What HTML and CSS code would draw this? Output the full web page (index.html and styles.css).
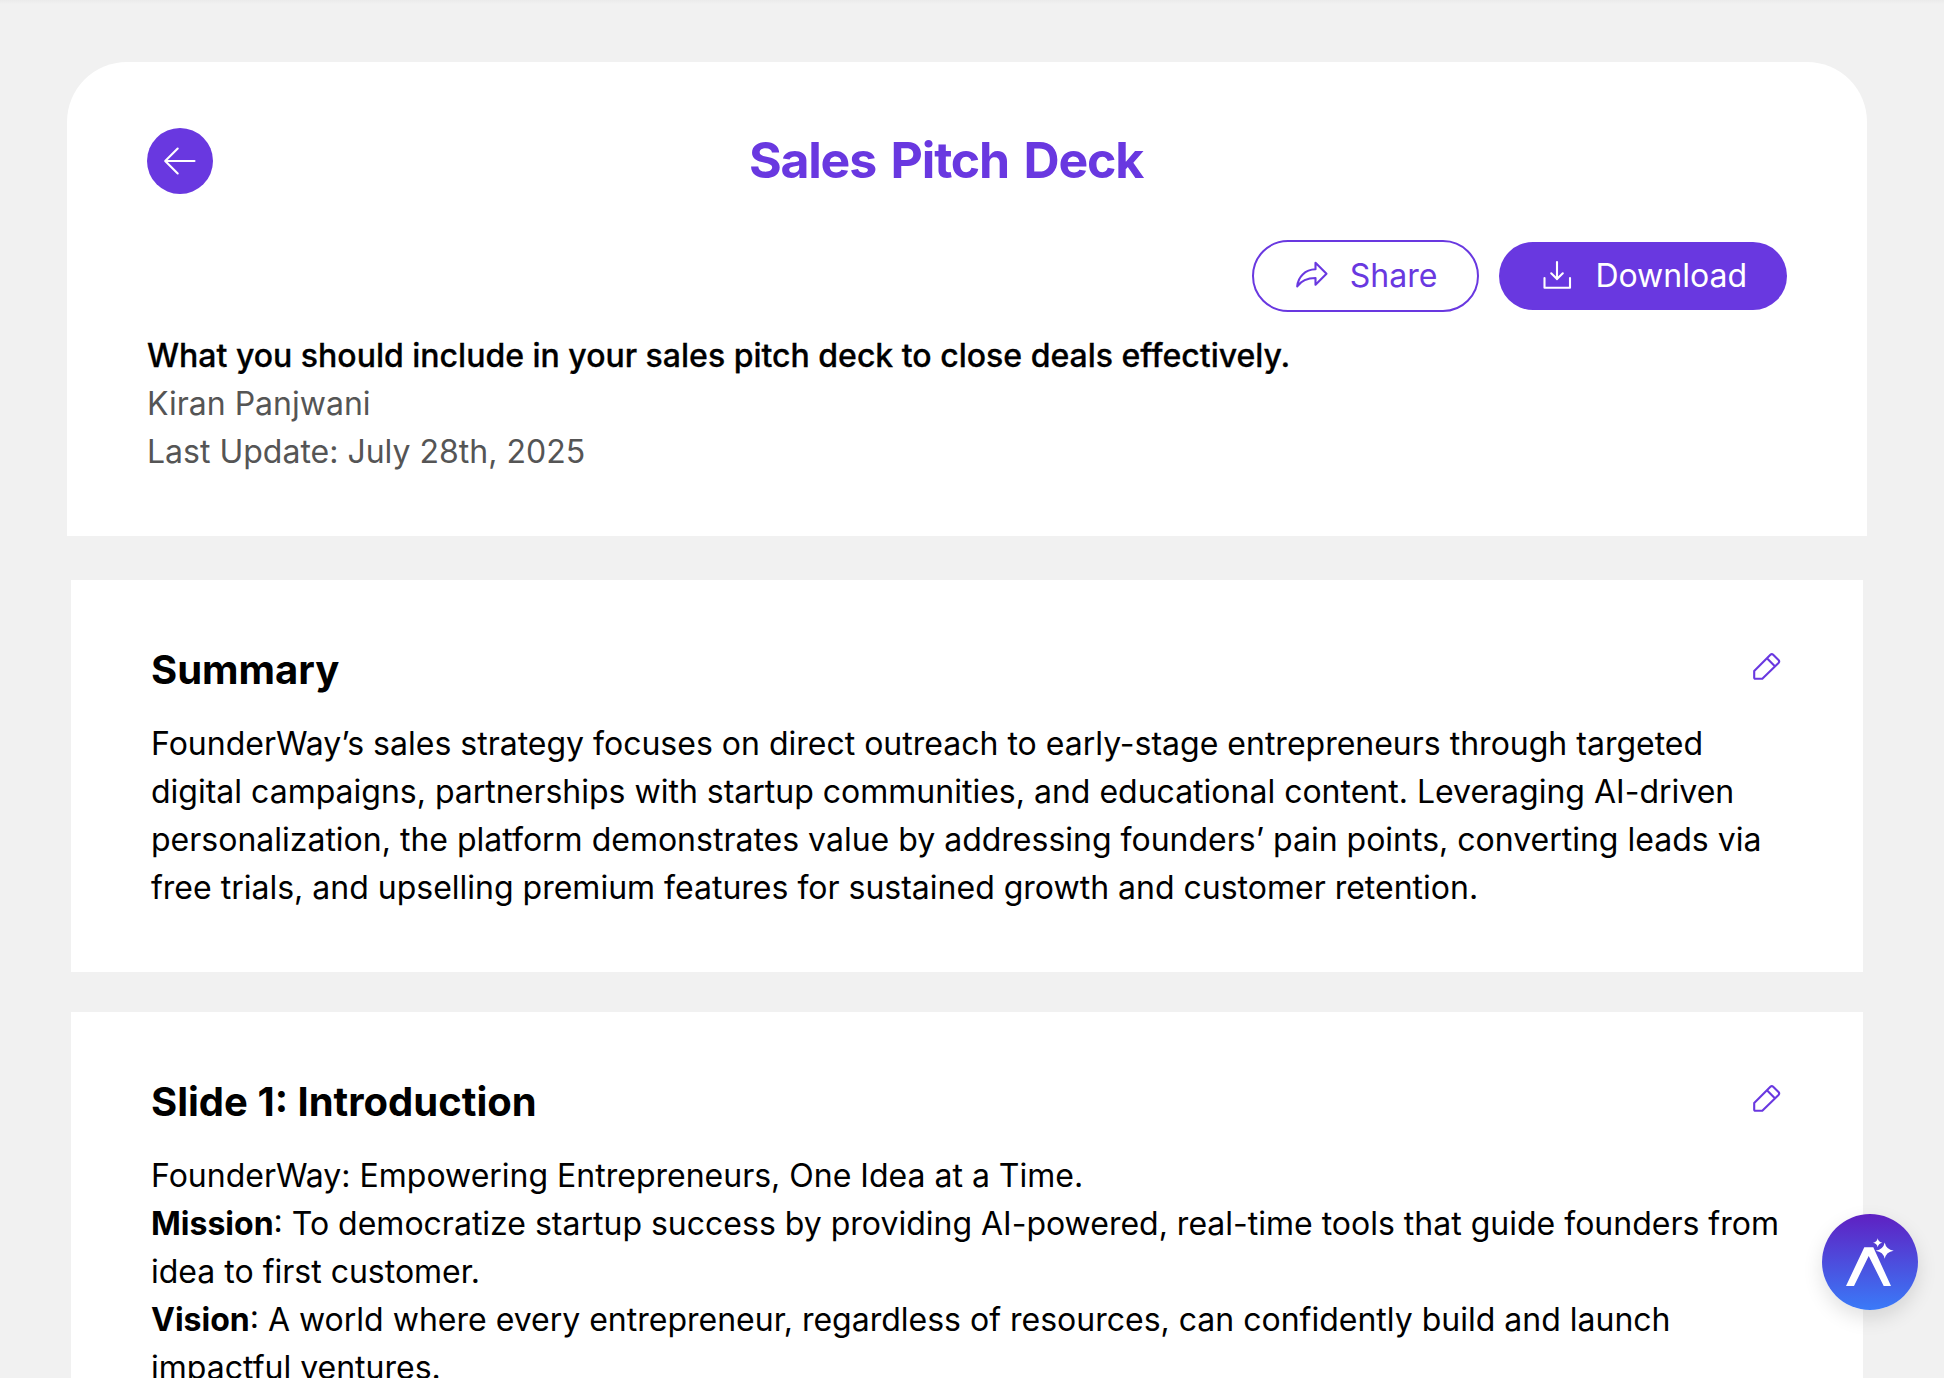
FILE: index.html
```html
<!DOCTYPE html>
<html lang="en">
<head>
    <meta charset="UTF-8">
    <meta name="viewport" content="width=device-width, initial-scale=1.0">
    <title>Sales Pitch Deck</title>
    <link rel="stylesheet" href="styles.css">
</head>
<body>
    <main class="container">
        <header class="deck-header">
            <div class="title-row">
                <button class="back-btn" aria-label="Back">
                    <svg width="66" height="66" viewBox="0 0 66 66"><path d="M47.5 33H18.5M30.7 20.5L18.2 33l12.5 12.5"/></svg>
                </button>
                <h1>Sales Pitch Deck</h1>
            </div>
            <div class="actions">
                <button class="btn btn-outline">
                    <svg width="36" height="36" viewBox="0 0 36 36"><path d="M21.500 4.800L32.500 15.700 21.500 26.700V20C13.500 20 7.500 22.300 3.200 28.400C4 19 11 11.500 21.500 11.300z"/></svg>
                    Share
                </button>
                <button class="btn btn-primary">
                    <svg width="36" height="36" viewBox="0 0 36 36"><path d="M18 4v17.300M12.200 15.300l5.800 5.800 5.800-5.800M5.500 20V29.700h25.500V20"/></svg>
                    Download
                </button>
            </div>
            <div class="info">
                <p class="lead">What you should include in your sales pitch deck to close deals effectively.</p>
                <p>Kiran Panjwani</p>
                <p>Last Update: July 28th, 2025</p>
            </div>
        </header>

        <section class="slide">
            <div class="slide-head">
                <h2>Summary</h2>
                <button class="edit-btn" aria-label="Edit">
                    <svg width="32" height="32" viewBox="0 0 32 32"><path d="M3.200 20L19.400 3.800a2 2 0 0 1 2.800 0l5.300 5.300a2 2 0 0 1 0 2.800L11.300 27.700H4.200a1 1 0 0 1-1-1zM16.200 7.500l7.700 7.700"/></svg>
                </button>
            </div>
            <p>FounderWay’s sales strategy focuses on direct outreach to early-stage entrepreneurs through targeted digital campaigns, partnerships with startup communities, and educational content. Leveraging AI-driven personalization, the platform demonstrates value by addressing founders’ pain points, converting leads via free trials, and upselling premium features for sustained growth and customer retention.</p>
        </section>

        <section class="slide">
            <div class="slide-head">
                <h2>Slide 1: Introduction</h2>
                <button class="edit-btn" aria-label="Edit">
                    <svg width="32" height="32" viewBox="0 0 32 32"><path d="M3.200 20L19.400 3.800a2 2 0 0 1 2.800 0l5.300 5.300a2 2 0 0 1 0 2.800L11.300 27.700H4.200a1 1 0 0 1-1-1zM16.200 7.500l7.700 7.700"/></svg>
                </button>
            </div>
            <p>FounderWay: Empowering Entrepreneurs, One Idea at a Time.</p>
            <p><strong>Mission</strong>: To democratize startup success by providing AI-powered, real-time tools that guide founders from idea to first customer.</p>
            <p><strong>Vision</strong>: A world where every entrepreneur, regardless of resources, can confidently build and launch impactful ventures.</p>
        </section>
    </main>

    <button class="assistant" aria-label="Assistant">
        <svg width="96" height="96" viewBox="0 0 96 96">
            <path d="M24 72L42.300 33.300h9L69 72h-7.300l-15-30L32 72z"/>
            <path d="M62.700 28.600q1.300 6.900 9 8.100q-7.700 1.200-9 8.100q-1.300-6.900-9-8.100q7.700-1.200 9-8.100z"/>
            <path d="M55.700 24.200q.7 3.900 4.700 4.500q-4 .6-4.700 4.500q-.7-3.900-4.700-4.500q4-.6 4.700-4.500z"/>
        </svg>
    </button>
</body>
</html>
```

FILE: styles.css
```css
* {
    box-sizing: border-box;
}
body {
    margin: 0;
    height: 100vh;
    overflow: hidden;
    background: linear-gradient(#ebebeb, #f1f1f1 4px);
    font-family: Inter, "Liberation Sans", sans-serif;
    font-size: 32px;
    line-height: 48px;
    color: #000;
}
h1, h2, p {
    margin: 0;
}
button {
    padding: 0;
    border: none;
    background: none;
    font: inherit;
    cursor: pointer;
}
svg {
    display: block;
    flex: none;
    fill: none;
    stroke: currentColor;
    stroke-width: 2.1;
    stroke-linecap: round;
    stroke-linejoin: round;
}
.container {
    width: 1800px;
    margin-left: 67px;
    padding-top: 62px;
}
.deck-header {
    padding: 66px 80px 60px;
    margin-bottom: 44px;
    background-color: #fff;
    border-radius: 60px 60px 0 0;
}
.title-row {
    display: flex;
    align-items: center;
    height: 66px;
}
.back-btn {
    width: 66px;
    height: 66px;
    border-radius: 50%;
    background-color: #6938e0;
    color: #fff;
}
h1 {
    flex: 1;
    padding-right: 108px;
    padding-bottom: 3px;
    text-align: center;
    font-size: 50px;
    font-weight: 700;
    letter-spacing: -1.2px;
    word-spacing: 4px;
    color: #6938e0;
}
.actions {
    display: flex;
    justify-content: flex-end;
    align-items: center;
    gap: 20px;
    height: 72px;
    margin-top: 46px;
    margin-bottom: 20px;
}
.btn {
    display: flex;
    align-items: center;
    gap: 20px;
    border-radius: 36px;
}
.btn-outline {
    height: 72px;
    padding: 0 40px;
    border: 2px solid #6938e0;
    color: #6938e0;
}
.btn-primary {
    height: 68px;
    padding: 0 40px;
    background-color: #6938e0;
    color: #fff;
}
.info {
    color: #555;
}
.lead {
    font-weight: 500;
    color: #000;
    -webkit-text-stroke: 0.3px #000;
}
.slide {
    margin: 0 4px 40px;
    padding: 60px 80px;
    background-color: #fff;
}
.slide-head {
    display: flex;
    justify-content: space-between;
    margin-bottom: 20px;
}
h2 {
    font-size: 40px;
    font-weight: 700;
    line-height: 60px;
}
.edit-btn {
    height: 32px;
    margin-top: 11px;
    color: #6938e0;
}
.assistant {
    position: fixed;
    right: 26px;
    bottom: 68px;
    width: 96px;
    height: 96px;
    border-radius: 50%;
    background: linear-gradient(#5f20c2, #3a7af8);
    box-shadow: 0 8px 20px rgba(0,0,0,0.12);
}
.assistant svg {
    fill: #fff;
    stroke: none;
}
```
